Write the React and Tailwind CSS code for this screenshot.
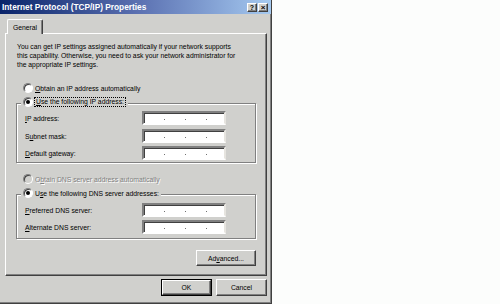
import React from "react";

function Radio({ checked, disabled }) {
  return (
    <span
      className={
        disabled
          ? "w-[10px] h-[10px] shrink-0 rounded-full border border-t-[#808080] border-l-[#808080] border-b-white border-r-white bg-[#d0d0cd] shadow-[inset_1px_1px_0_#404040] flex items-center justify-center"
          : "w-[10px] h-[10px] shrink-0 rounded-full border border-t-[#808080] border-l-[#808080] border-b-white border-r-white bg-white shadow-[inset_1px_1px_0_#404040] flex items-center justify-center"
      }
    >
      {checked && <span className="w-[4px] h-[4px] rounded-full bg-black" />}
    </span>
  );
}

function IpInput() {
  return (
    <div className="w-[84px] h-[14px] bg-white border-2 border-t-[#808080] border-l-[#808080] border-b-white border-r-[#e6e4df] shadow-[inset_1px_1px_0_#404040] flex items-end pb-[3px] pl-[20px] gap-[20px]">
      <span className="w-[1px] h-[1px] bg-[#707070]" />
      <span className="w-[1px] h-[1px] bg-[#707070]" />
      <span className="w-[1px] h-[1px] bg-[#707070]" />
    </div>
  );
}

function FieldRow({ children, className }) {
  return (
    <div className={className}>
      <div className="flex items-center h-[14px]">
        <span className="w-[117px] whitespace-nowrap">{children}</span>
        <IpInput />
      </div>
    </div>
  );
}

function Button({ children, def, className }) {
  if (def) {
    return (
      <div className={"border border-black " + (className || "")}>
        <div className="w-full h-full border border-t-white border-l-white border-r-[#404040] border-b-[#404040] shadow-[inset_-1px_-1px_0_#808080] flex items-center justify-center">
          {children}
        </div>
      </div>
    );
  }
  return (
    <div
      className={
        "border border-t-white border-l-white border-r-[#404040] border-b-[#404040] shadow-[inset_-1px_-1px_0_#808080] flex items-center justify-center " +
        (className || "")
      }
    >
      {children}
    </div>
  );
}

export default function App() {
  return (
    <div className="w-[500px] h-[304px] bg-[#fcfdfc] flex overflow-hidden font-['Liberation_Sans',Arial,sans-serif] text-[6.8px] leading-[9px] text-black">
      <div className="w-[272px] h-[304px] flex flex-col bg-[#d0d0cd] border-r border-b border-r-[#404040] border-b-[#404040] shadow-[inset_-1px_-1px_0_#808080]">
        {/* Title bar */}
        <div className="h-[14px] flex items-center justify-between pl-[2px] pr-[3px] bg-linear-to-r from-[#0a246a] via-[#5a6fb0] to-[#a6caf0]">
          <span className="text-white font-bold text-[8.3px] leading-[10px] whitespace-nowrap">
            Internet Protocol (TCP/IP) Properties
          </span>
          <div className="flex gap-[1px]">
            <Button className="w-[10px] h-[9px] bg-[#d0d0cd] text-[7px] leading-[7px] font-bold">?</Button>
            <Button className="w-[10px] h-[9px] bg-[#d0d0cd] text-[8px] leading-[7px] font-bold">×</Button>
          </div>
        </div>

        {/* Tab header */}
        <div className="mt-[5px] ml-[7px] relative z-10 -mb-[1px] w-[36px] h-[15px] bg-[#d0d0cd] border-t border-l border-t-white border-l-white border-r border-r-[#404040] shadow-[inset_-1px_0_0_#808080] rounded-t-[2px] flex items-center justify-center">
          General
        </div>

        {/* Tab panel */}
        <div className="ml-[5px] w-[262px] h-[243px] border-t border-l border-t-white border-l-white border-r border-b border-r-[#404040] border-b-[#404040] shadow-[inset_-1px_-1px_0_#808080] flex flex-col items-start">
          <p className="mt-[8px] ml-[11px] whitespace-nowrap">
            You can get IP settings assigned automatically if your network supports
            <br />
            this capability. Otherwise, you need to ask your network administrator for
            <br />
            the appropriate IP settings.
          </p>

          <div className="mt-[13px] ml-[17px] h-[12px] flex items-center gap-[2px] whitespace-nowrap">
            <Radio />
            <span>
              <span className="underline">O</span>btain an IP address automatically
            </span>
          </div>

          {/* Group 1 */}
          <div className="mt-[9px] ml-[10px] w-[240px] h-[60px] border border-[#808080] shadow-[inset_1px_1px_0_#fff,1px_1px_0_#fff] flex flex-col items-start">
            <div className="-mt-[8px] ml-[4px] h-[12px] px-[2px] bg-[#d0d0cd] flex items-center gap-[1px] whitespace-nowrap">
              <Radio checked />
              <span className="border border-dotted border-black px-[1px] leading-[8px]">
                <span className="underline">U</span>se the following IP address:
              </span>
            </div>
            <FieldRow className="mt-[3px] ml-[8px]">
              <span className="underline">I</span>P address:
            </FieldRow>
            <FieldRow className="mt-[4px] ml-[8px]">
              S<span className="underline">u</span>bnet mask:
            </FieldRow>
            <FieldRow className="mt-[3px] ml-[8px]">
              <span className="underline">D</span>efault gateway:
            </FieldRow>
          </div>

          <div className="mt-[10px] ml-[17px] h-[12px] flex items-center gap-[2px] whitespace-nowrap">
            <Radio disabled />
            <span className="text-[#808080] [text-shadow:1px_1px_0_#fff]">
              O<span className="underline">b</span>tain DNS server address automatically
            </span>
          </div>

          {/* Group 2 */}
          <div className="mt-[9px] ml-[10px] w-[240px] h-[45px] border border-[#808080] shadow-[inset_1px_1px_0_#fff,1px_1px_0_#fff] flex flex-col items-start">
            <div className="-mt-[8px] ml-[4px] h-[12px] px-[2px] bg-[#d0d0cd] flex items-center gap-[2px] whitespace-nowrap">
              <Radio checked />
              <span>
                U<span className="underline">s</span>e the following DNS server addresses:
              </span>
            </div>
            <FieldRow className="mt-[4px] ml-[8px]">
              <span className="underline">P</span>referred DNS server:
            </FieldRow>
            <FieldRow className="mt-[3px] ml-[8px]">
              <span className="underline">A</span>lternate DNS server:
            </FieldRow>
          </div>

          <Button className="mt-[11px] ml-[190px] w-[60px] h-[16px]">
            <span>
              Ad<span className="underline">v</span>anced...
            </span>
          </Button>
        </div>

        {/* Bottom buttons */}
        <div className="mt-[3px] ml-[161px] flex gap-[4px]">
          <Button def className="w-[51px] h-[17px]">OK</Button>
          <Button className="w-[51px] h-[17px]">Cancel</Button>
        </div>
      </div>
    </div>
  );
}
